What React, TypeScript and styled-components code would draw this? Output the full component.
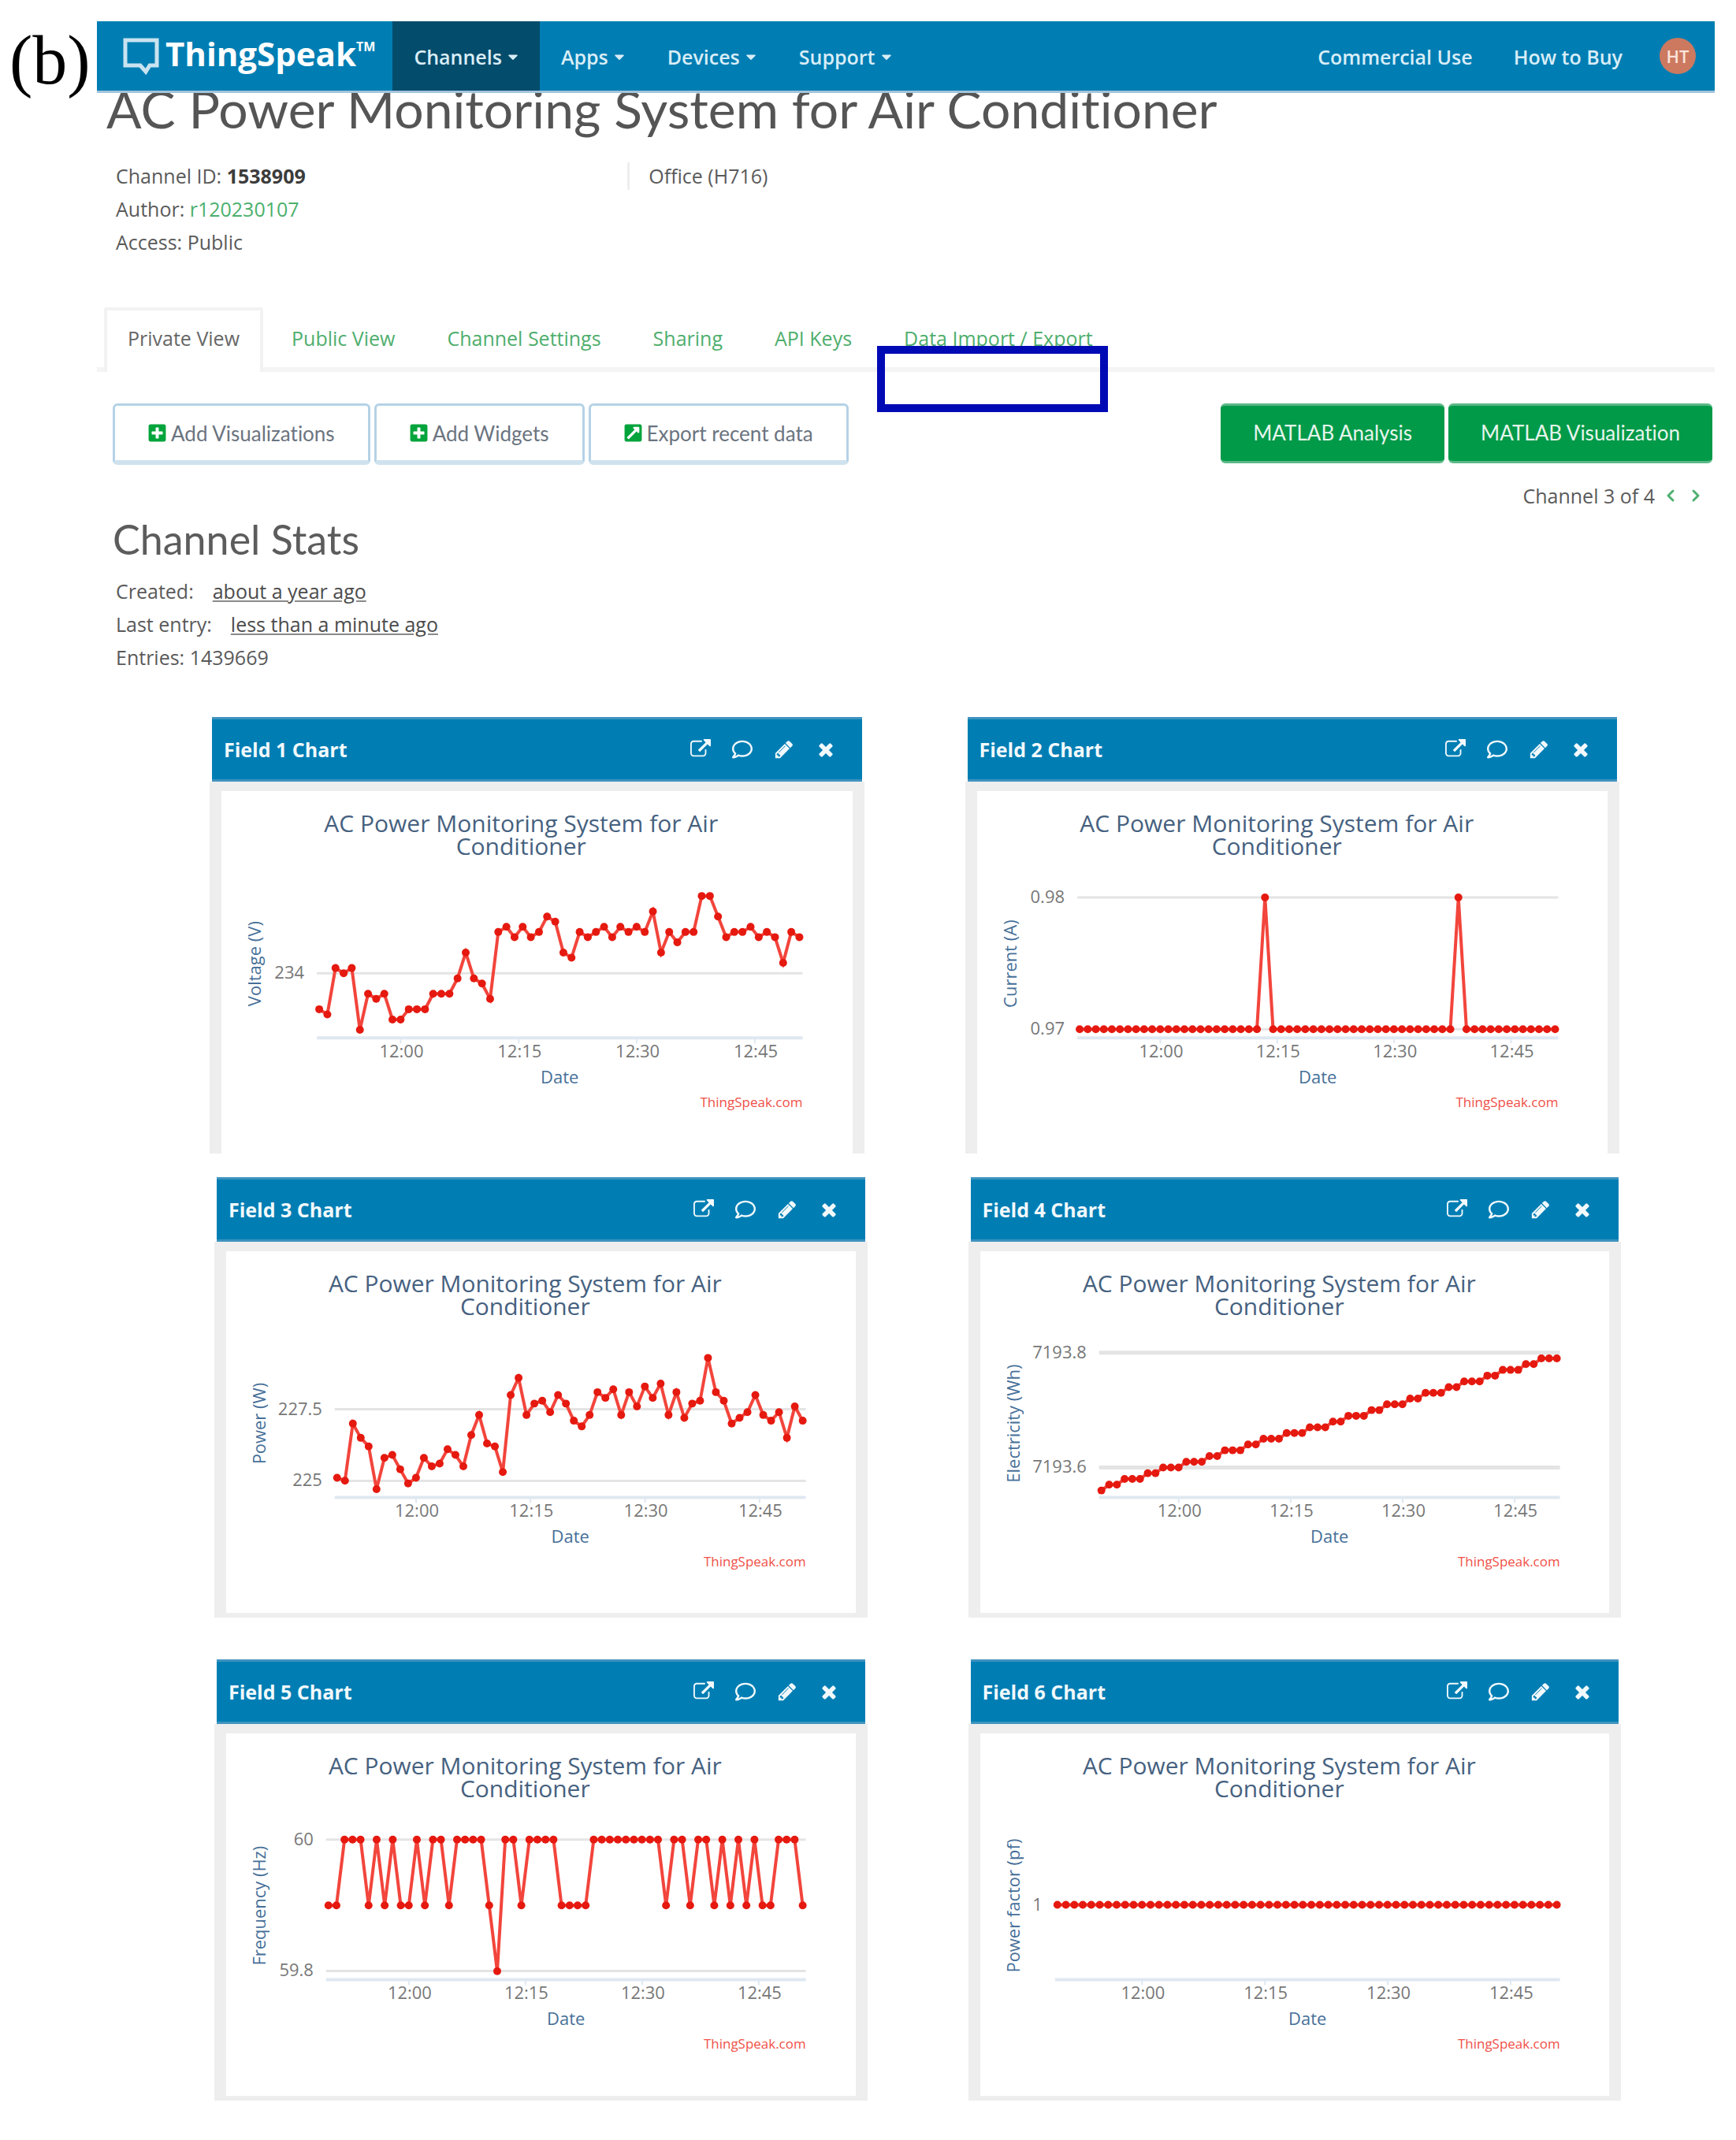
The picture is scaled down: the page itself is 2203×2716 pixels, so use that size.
import React from "react";
import styled, { createGlobalStyle } from "styled-components";
import { FaPlusSquare, FaExternalLinkSquareAlt, FaRegComment, FaCaretDown } from "react-icons/fa";
import { FiChevronLeft, FiChevronRight } from "react-icons/fi";

const sans = '"Open Sans", "Noto Sans", sans-serif';
const display = 'Lato, "Open Sans", sans-serif';
const blue = "#007eb4";
const green = "#009a49";

const GlobalStyle = createGlobalStyle`
  * { box-sizing: border-box; }
  body { margin: 0; background: #fff; color: #5a5a5a; font: 25px/42px ${sans}; }
  button { font: inherit; color: inherit; background: none; border: 0; padding: 0; cursor: pointer; }
  a { color: inherit; text-decoration: none; }
  h1, h2, h3, p { margin: 0; padding: 0; font-weight: 400; }
`;

const Figure = styled.div`
  display: grid;
  grid-template-columns: 123px minmax(0, 1fr);
  padding: 27px 27px 46px 0;
`;

const FigureLabel = styled.div`
  padding-left: 12px;
  font: 88px/100px "Liberation Serif", serif;
  color: #000;
`;

/* Top navigation */
const Header = styled.header`
  position: relative;
  z-index: 1;
  display: flex;
  height: 91px;
  padding: 0 24px 0 33px;
  background: ${blue};
  border-bottom: 3px solid #a3c4dc;
  color: #d9edf7;
  font-weight: 600;
`;

const Brand = styled.a`
  display: flex;
  align-items: center;
  gap: 8px;
  margin-right: 22px;
  color: #fff;
`;

const BubbleLogo = styled.svg`
  width: 46px;
  height: 48px;
`;

const Wordmark = styled.span`
  display: flex;
  padding-bottom: 7px;
  font-size: 42px;
  font-weight: 700;
`;

const Trademark = styled.sup`
  font-size: 16px;
  line-height: 24px;
  vertical-align: top;
`;

const NavButton = styled.button<{ $active?: boolean }>`
  display: flex;
  align-items: center;
  gap: 7px;
  padding: 2px 27px 0;
  background: ${(p) => (p.$active ? "#044c6c" : "transparent")};

  svg { width: 14px; height: 20px; }
`;

const AccountNav = styled.nav`
  display: flex;
  align-items: center;
  gap: 47px;
  margin-left: auto;
`;

const AccountLinks = styled.div`
  display: flex;
  gap: 52px;
  padding-top: 2px;
`;

const Avatar = styled.button`
  width: 46px;
  height: 46px;
  border-radius: 50%;
  background: #cc7960;
  color: #fbe3da;
  font-size: 22px;
  line-height: 46px;
`;

/* Channel heading */
const Title = styled.h1`
  margin: -12px 0 0 12px;
  font: 400 66px/64px ${display};
  font-variant-ligatures: none;
  color: #555;
`;

const Info = styled.section`
  display: grid;
  grid-template-columns: 32fr 68fr;
  margin-top: 32px;
  padding-left: 24px;

  strong { color: #3c3c3c; }
`;

const AuthorLink = styled.a`
  color: #4bb06c;
`;

const Description = styled.p`
  align-self: start;
  margin-top: 4px;
  padding-left: 24px;
  border-left: 3px solid #eee;
  line-height: 35px;
`;

const Tabs = styled.nav`
  position: relative;
  display: flex;
  gap: 6px;
  margin-top: 62px;
  padding-left: 9px;
  box-shadow: inset 0 -6px #f4f4f4;
`;

const Tab = styled.a<{ $active?: boolean }>`
  height: 82px;
  padding: 14px 26px 0;
  border: 4px solid ${(p) => (p.$active ? "#f2f2f2" : "transparent")};
  border-bottom: 0;
  border-radius: 4px 4px 0 0;
  background: ${(p) => (p.$active ? "#fff" : "transparent")};
  color: ${(p) => (p.$active ? "#666" : "#4fae6d")};
`;

const Highlight = styled.div`
  position: absolute;
  left: 990px;
  top: 49px;
  width: 293px;
  height: 84px;
  border: 10px solid #000ab4;
`;

/* Actions */
const Toolbar = styled.div`
  display: flex;
  justify-content: space-between;
  align-items: flex-start;
  margin-top: 40px;
  padding: 0 3px 0 20px;
  font: 26px/32px ${display};
  font-variant-ligatures: none;
`;

const ButtonGroup = styled.div`
  display: flex;
  gap: 5px;
`;

const OutlineButton = styled.button`
  display: flex;
  align-items: center;
  gap: 6px;
  height: 78px;
  padding: 0 42px;
  border: 3px solid #b5d2e6;
  border-bottom: 6px solid #cfe2ee;
  border-radius: 6px;
  background: #fff;
  color: #6b7480;

  svg { width: 23px; height: 25px; color: #04a43c; }
`;

const SolidButton = styled.button`
  height: 76px;
  padding: 0 41px 3px;
  border: 3px solid #5cb886;
  border-width: 3px 0;
  border-radius: 6px;
  background: ${green};
  color: #e6f5eb;
`;

const Pager = styled.div`
  display: flex;
  justify-content: flex-end;
  align-items: center;
  gap: 8px;
  margin-top: 18px;
  padding-right: 12px;
`;

const PagerButton = styled.button`
  display: flex;
  width: 24px;
  color: #4fb070;

  svg { width: 24px; height: 24px; stroke-width: 3px; }
`;

/* Stats */
const Stats = styled.section`
  padding-left: 24px;
`;

const StatsHeading = styled.h2`
  margin: 3px 0 14px -4px;
  font: 400 52px/62px ${display};
  color: #5c5c5c;
`;

const StatValue = styled.span`
  margin-left: 24px;
  color: #4c4c4c;
  text-decoration: underline;
  text-decoration-color: #8a8a8a;
`;

/* Charts */
const ChartRow = styled.div<{ $top: number; $left: number; $right: number }>`
  display: grid;
  grid-template-columns: repeat(2, minmax(0, 1fr));
  gap: 128px;
  margin-top: ${(p) => p.$top}px;
  padding: 0 ${(p) => p.$right}px 0 ${(p) => p.$left}px;
`;

const CardHeader = styled.header`
  display: flex;
  align-items: center;
  justify-content: space-between;
  height: 82px;
  margin: 0 3px;
  padding: 0 33px 0 15px;
  border: 3px solid #3f93bf;
  border-width: 3px 0;
  background: ${blue};
  color: #f2f9fc;
`;

const CardTitle = styled.h3`
  font-size: 25px;
  font-weight: 700;
`;

const CardActions = styled.div`
  display: flex;
  gap: 27px;
`;

const IconButton = styled.button`
  display: flex;

  svg { width: 26px; height: 26px; fill: currentColor; }
`;

const CardBody = styled.div<{ $open?: boolean }>`
  border: 15px solid #eee;
  border-top-width: 12px;
  border-bottom-width: ${(p) => (p.$open ? 0 : 6)}px;
`;

const Plot = styled.svg`
  display: block;
  width: 100%;
  font-family: ${sans};

  .heading { font-size: 30px; fill: #46617f; text-anchor: middle; }
  .tick { font-size: 22px; fill: #777; }
  .axis { font-size: 22px; fill: #466f98; text-anchor: middle; }
  .credit { font-size: 17px; fill: #f05048; text-anchor: end; }
`;

const faPaths = {
  external:
    "M1408 928v320q0 119-84.5 203.5t-203.5 84.5h-832q-119 0-203.5-84.5t-84.5-203.5v-832q0-119 84.5-203.5t203.5-84.5h704q14 0 23 9t9 23v64q0 14-9 23t-23 9h-704q-66 0-113 47t-47 113v832q0 66 47 113t113 47h832q66 0 113-47t47-113v-320q0-14 9-23t23-9h64q14 0 23 9t9 23zm384-864v512q0 26-19 45t-45 19-45-19l-176-176-652 652q-10 10-23 10t-23-10l-114-114q-10-10-10-23t10-23l652-652-176-176q-19-19-19-45t19-45 45-19h512q26 0 45 19t19 45z",
  pencil:
    "M491 1536l91-91-235-235-91 91v107h128v128h107zm523-928q0-22-22-22-10 0-17 7l-542 542q-7 7-7 17 0 22 22 22 10 0 17-7l542-542q7-7 7-17zm-54-192l416 416-832 832h-416v-416zm683 96q0 53-37 90l-166 166-416-416 166-165q36-38 90-38 53 0 91 38l235 234q37 39 37 91z",
  times:
    "M1490 1322q0 40-28 68l-136 136q-28 28-68 28t-68-28l-294-294-294 294q-28 28-68 28t-68-28l-136-136q-28-28-28-68t28-68l294-294-294-294q-28-28-28-68t28-68l136-136q28-28 68-28t68 28l294 294 294-294q28-28 68-28t68 28l136 136q28 28 28 68t-28 68l-294 294 294 294q28 28 28 68z",
};

const Glyph = ({ d }: { d: string }) => (
  <svg viewBox="0 0 1792 1792" aria-hidden="true">
    <path d={d} />
  </svg>
);

type Chart = {
  field: number;
  axis: string;
  left: number;
  grid: { value: number; label: string; y: number }[];
  scale: number;
  gridWidth?: number;
  values: number[];
};

const repeat = (...runs: [number, number][]) =>
  runs.flatMap(([value, count]) => Array<number>(count).fill(value));

const charts: Chart[] = [
  {
    field: 1,
    axis: "Voltage (V)",
    left: 121,
    grid: [{ value: 0, label: "234", y: 231 }],
    scale: 6.53,
    values: [
      -7, -8, 1, 0, 1, -11, -4, -5, -4, -9, -9, -7, -7, -7, -4, -4, -4, -1, 4, -1, -2, -5, 8, 9, 7, 9, 7, 8, 11, 10,
      4, 3, 8, 7, 8, 9, 7, 9, 8, 9, 8, 12, 4, 8, 6, 8, 8, 15, 15, 11, 7, 8, 8, 9, 7, 8, 7, 2, 8, 7,
    ],
  },
  {
    field: 2,
    axis: "Current (A)",
    left: 127,
    grid: [
      { value: 0.98, label: "0.98", y: 135 },
      { value: 0.97, label: "0.97", y: 302 },
    ],
    scale: 16700,
    values: repeat([0.97, 23], [0.98, 1], [0.97, 23], [0.98, 1], [0.97, 12]),
  },
  {
    field: 3,
    axis: "Power (W)",
    left: 138,
    grid: [
      { value: 2.5, label: "227.5", y: 201 },
      { value: 0, label: "225", y: 292 },
    ],
    scale: 36.3,
    values: [
      0.1, 0, 2, 1.5, 1.2, -0.3, 0.8, 0.9, 0.4, -0.1, 0.1, 0.8, 0.5, 0.6, 1.1, 0.9, 0.5, 1.6, 2.3, 1.3, 1.2, 0.3, 3,
      3.6, 2.3, 2.7, 2.8, 2.4, 3, 2.7, 2.1, 1.9, 2.3, 3.1, 2.9, 3.2, 2.3, 3.1, 2.6, 3.3, 2.9, 3.4, 2.3, 3.1, 2.2,
      2.7, 2.8, 4.3, 3.1, 2.8, 2, 2.2, 2.4, 3, 2.3, 2.1, 2.4, 1.5, 2.6, 2.1,
    ],
  },
  {
    field: 4,
    axis: "Electricity (Wh)",
    left: 151,
    grid: [
      { value: 80, label: "7193.8", y: 129 },
      { value: 60, label: "7193.6", y: 275 },
    ],
    scale: 7.3,
    gridWidth: 5,
    values: [1, 2, 3, 2, 3, 3, 2, 3, 2, 3, 3, 3, 2, 3, 2, 3, 2, 3, 2, 3, 2, 3, 2, 3].flatMap((n, i) =>
      Array<number>(n).fill(56 + i)
    ),
  },
  {
    field: 5,
    axis: "Frequency (Hz)",
    left: 127,
    grid: [
      { value: 60, label: "60", y: 135 },
      { value: 59.8, label: "59.8", y: 302 },
    ],
    scale: 837,
    values: repeat(
      [59.9, 2], [60, 3], [59.9, 1], [60, 1], [59.9, 1], [60, 1], [59.9, 2], [60, 1], [59.9, 1], [60, 2], [59.9, 1],
      [60, 4], [59.9, 1], [59.8, 1], [60, 2], [59.9, 1], [60, 4], [59.9, 4], [60, 9], [59.9, 1], [60, 2], [59.9, 1],
      [60, 2], [59.9, 1], [60, 1], [59.9, 1], [60, 1], [59.9, 1], [60, 1], [59.9, 2], [60, 3], [59.9, 1]
    ),
  },
  {
    field: 6,
    axis: "Power factor (pf)",
    left: 95,
    grid: [{ value: 1, label: "1", y: 218 }],
    scale: 1,
    values: repeat([1, 60]),
  },
];

const plotRight = 737;
const plotBottom = 313;

function ChartCard({ chart, open }: { chart: Chart; open?: boolean }) {
  const { field, axis, left, grid, scale, gridWidth = 3, values } = chart;
  const first = left + 3;
  const span = plotRight - 4 - first;
  const points = values.map((v, i) => [
    first + (span * i) / (values.length - 1),
    grid[0].y + (grid[0].value - v) * scale,
  ]);
  const hour = ["12:00", "12:15", "12:30", "12:45"];

  return (
    <article>
      <CardHeader>
        <CardTitle>Field {field} Chart</CardTitle>
        <CardActions>
          <IconButton aria-label="Open in new window"><Glyph d={faPaths.external} /></IconButton>
          <IconButton aria-label="Comments"><FaRegComment /></IconButton>
          <IconButton aria-label="Edit"><Glyph d={faPaths.pencil} /></IconButton>
          <IconButton aria-label="Close"><Glyph d={faPaths.times} /></IconButton>
        </CardActions>
      </CardHeader>
      <CardBody $open={open}>
        <Plot viewBox="0 0 800 460" role="img" aria-label={axis}>
          <text className="heading" x="380" y="52">AC Power Monitoring System for Air</text>
          <text className="heading" x="380" y="81">Conditioner</text>
          {grid.map((g) => (
            <g key={g.label}>
              <line x1={left} x2={plotRight} y1={g.y} y2={g.y} stroke="#e4e4e4" strokeWidth={gridWidth} />
              <text className="tick" x={left - 16} y={g.y + 7} textAnchor="end">{g.label}</text>
            </g>
          ))}
          <line x1={left} x2={plotRight} y1={plotBottom} y2={plotBottom} stroke="#dfe8f1" strokeWidth="4" />
          {hour.map((label, i) => {
            const x = first + (span * (10.35 + 15 * i)) / 61;
            return (
              <g key={label}>
                <line x1={x} x2={x} y1={plotBottom} y2={plotBottom + 7} stroke="#dfe8f1" strokeWidth="2" />
                <text className="tick" x={x + 1} y="338" textAnchor="middle">{label}</text>
              </g>
            );
          })}
          <text className="axis" x={(left + plotRight) / 2} y="371">Date</text>
          <text className="axis" transform="translate(50 219) rotate(-90)">{axis}</text>
          <text className="credit" x={plotRight} y="401">ThingSpeak.com</text>
          <polyline points={points.map((p) => p.join(",")).join(" ")} fill="none" stroke="#f2453c" strokeWidth="4" />
          {points.map(([x, y], i) => (
            <circle key={i} cx={x} cy={y} r="5" fill="#e5190f" />
          ))}
        </Plot>
      </CardBody>
    </article>
  );
}

export default function App() {
  return (
    <>
      <GlobalStyle />
      <Figure>
        <FigureLabel>(b)</FigureLabel>
        <main>
          <Header>
            <Brand href="#">
              <BubbleLogo viewBox="0 0 46 48" fill="none" stroke="#c9e3f0" strokeWidth="5" aria-hidden="true">
                <path d="M3 4H43V36H34L29 44L22 36H3Z" />
              </BubbleLogo>
              <Wordmark>ThingSpeak<Trademark>TM</Trademark></Wordmark>
            </Brand>
            <NavButton $active>Channels <FaCaretDown /></NavButton>
            <NavButton>Apps <FaCaretDown /></NavButton>
            <NavButton>Devices <FaCaretDown /></NavButton>
            <NavButton>Support <FaCaretDown /></NavButton>
            <AccountNav>
              <AccountLinks>
                <a href="#">Commercial Use</a>
                <a href="#">How to Buy</a>
              </AccountLinks>
              <Avatar>HT</Avatar>
            </AccountNav>
          </Header>

          <Title>AC Power Monitoring System for Air Conditioner</Title>
          <Info>
            <div>
              <p>Channel ID: <strong>1538909</strong></p>
              <p>Author: <AuthorLink href="#">r120230107</AuthorLink></p>
              <p>Access: Public</p>
            </div>
            <Description>Office (H716)</Description>
          </Info>

          <Tabs>
            <Tab href="#" $active>Private View</Tab>
            <Tab href="#">Public View</Tab>
            <Tab href="#">Channel Settings</Tab>
            <Tab href="#">Sharing</Tab>
            <Tab href="#">API Keys</Tab>
            <Tab href="#">Data Import / Export</Tab>
            <Highlight />
          </Tabs>

          <Toolbar>
            <ButtonGroup>
              <OutlineButton><FaPlusSquare />Add Visualizations</OutlineButton>
              <OutlineButton><FaPlusSquare />Add Widgets</OutlineButton>
              <OutlineButton><FaExternalLinkSquareAlt />Export recent data</OutlineButton>
            </ButtonGroup>
            <ButtonGroup>
              <SolidButton>MATLAB Analysis</SolidButton>
              <SolidButton>MATLAB Visualization</SolidButton>
            </ButtonGroup>
          </Toolbar>
          <Pager>
            Channel 3 of 4
            <PagerButton aria-label="Previous channel"><FiChevronLeft /></PagerButton>
            <PagerButton aria-label="Next channel"><FiChevronRight /></PagerButton>
          </Pager>

          <Stats>
            <StatsHeading>Channel Stats</StatsHeading>
            <p>Created:<StatValue>about a year ago</StatValue></p>
            <p>Last entry:<StatValue>less than a minute ago</StatValue></p>
            <p>Entries: 1439669</p>
          </Stats>

          <ChartRow $top={55} $left={143} $right={121}>
            <ChartCard chart={charts[0]} open />
            <ChartCard chart={charts[1]} open />
          </ChartRow>
          <ChartRow $top={30} $left={149} $right={119}>
            <ChartCard chart={charts[2]} />
            <ChartCard chart={charts[3]} />
          </ChartRow>
          <ChartRow $top={53} $left={149} $right={119}>
            <ChartCard chart={charts[4]} />
            <ChartCard chart={charts[5]} />
          </ChartRow>
        </main>
      </Figure>
    </>
  );
}
